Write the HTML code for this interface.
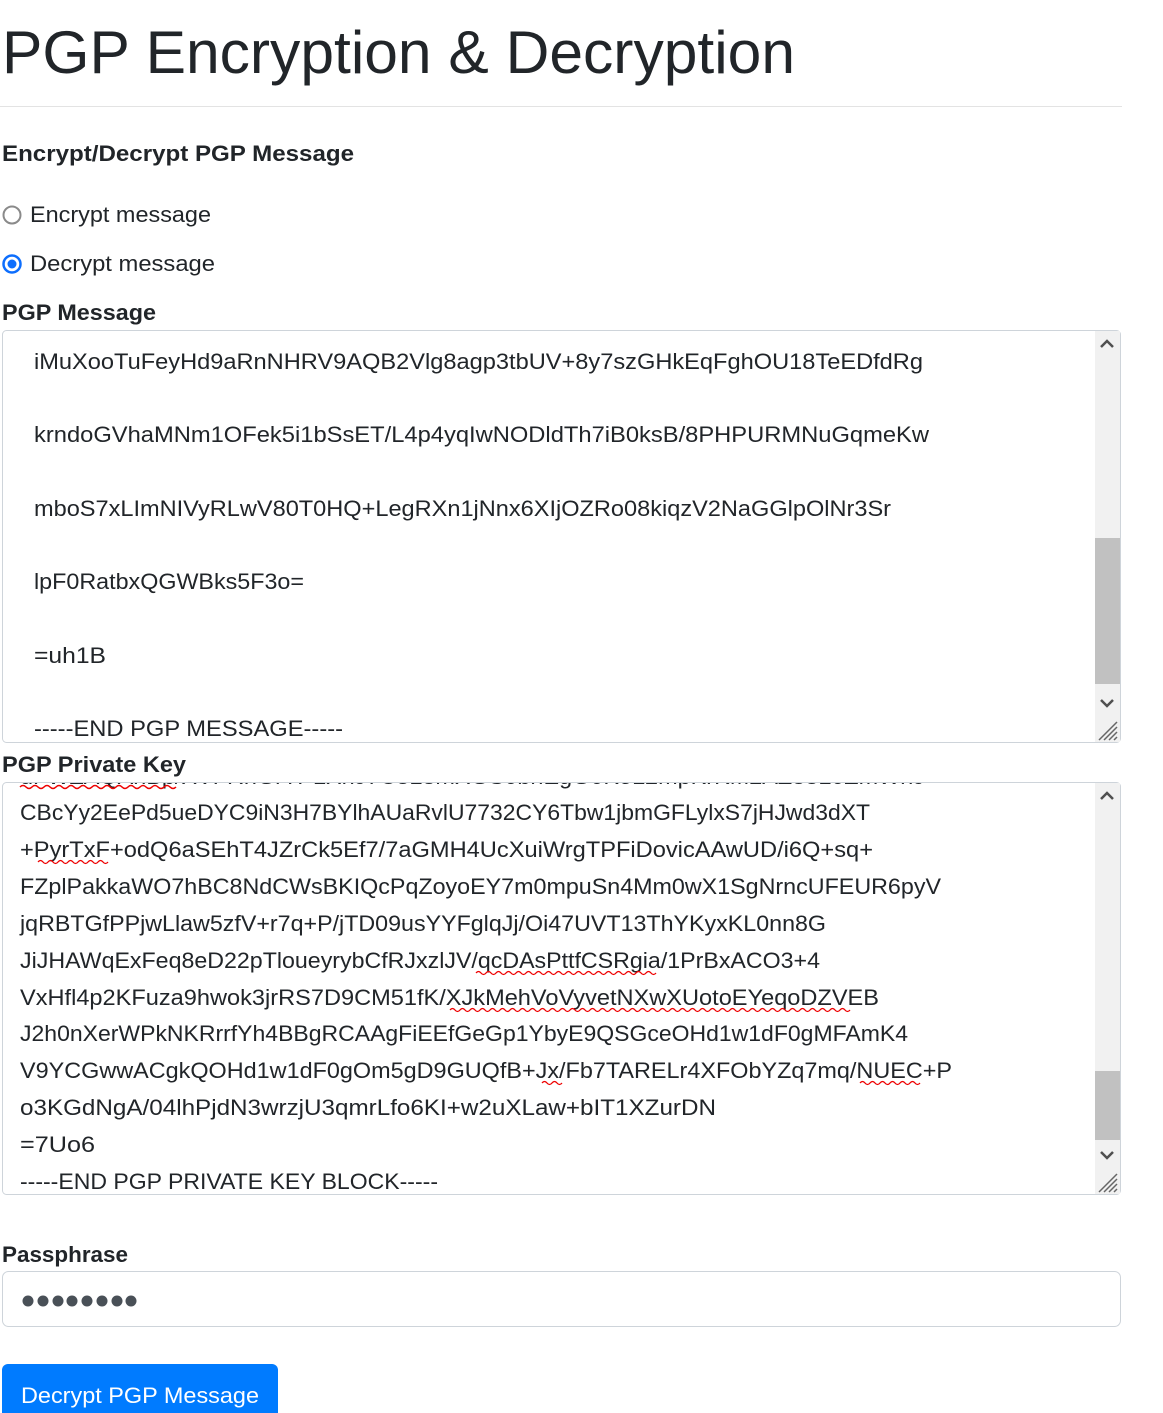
<!DOCTYPE html>
<html><head><meta charset="utf-8"><style>
html,body{margin:0;padding:0;background:#fff;width:1163px;height:1413px;overflow:hidden}
svg{display:block}
text{font-family:"Liberation Sans",sans-serif;fill:#212529}
.b{font-weight:bold}
</style></head><body>
<svg width="1163" height="1413" xmlns="http://www.w3.org/2000/svg">
<defs>
<clipPath id="c1"><rect x="3" y="331" width="1092" height="411"/></clipPath>
<clipPath id="c2"><rect x="3" y="783" width="1092" height="411"/></clipPath>
</defs>
<text x="2" y="73" font-size="60" textLength="793" lengthAdjust="spacingAndGlyphs">PGP Encryption &amp; Decryption</text>
<rect x="0" y="106" width="1122" height="1" fill="#e3e3e3"/>
<text class="b" x="2" y="161" font-size="22" textLength="352" lengthAdjust="spacingAndGlyphs">Encrypt/Decrypt PGP Message</text>
<circle cx="12" cy="215" r="8.5" fill="#fff" stroke="#8a8a8a" stroke-width="2"/>
<text x="30" y="222" font-size="22" textLength="181" lengthAdjust="spacingAndGlyphs">Encrypt message</text>
<circle cx="12" cy="264" r="8.5" fill="#fff" stroke="#0d6efd" stroke-width="2.5"/>
<circle cx="12" cy="264" r="4.5" fill="#0d6efd"/>
<text x="30" y="271" font-size="22" textLength="185" lengthAdjust="spacingAndGlyphs">Decrypt message</text>
<text class="b" x="2" y="320" font-size="22" textLength="154" lengthAdjust="spacingAndGlyphs">PGP Message</text>

<rect x="2.5" y="330.5" width="1118" height="412" rx="4" fill="#fff" stroke="#ced4da"/>
<g clip-path="url(#c1)" font-size="22">
<text x="34" y="369" font-size="22" textLength="889" lengthAdjust="spacingAndGlyphs">iMuXooTuFeyHd9aRnNHRV9AQB2Vlg8agp3tbUV+8y7szGHkEqFghOU18TeEDfdRg</text>
<text x="34" y="442" font-size="22" textLength="895" lengthAdjust="spacingAndGlyphs">krndoGVhaMNm1OFek5i1bSsET/L4p4yqIwNODldTh7iB0ksB/8PHPURMNuGqmeKw</text>
<text x="34" y="516" font-size="22" textLength="857" lengthAdjust="spacingAndGlyphs">mboS7xLImNIVyRLwV80T0HQ+LegRXn1jNnx6XIjOZRo08kiqzV2NaGGlpOlNr3Sr</text>
<text x="34" y="589" font-size="22" textLength="270" lengthAdjust="spacingAndGlyphs">lpF0RatbxQGWBks5F3o=</text>
<text x="34" y="663" font-size="22" textLength="72" lengthAdjust="spacingAndGlyphs">=uh1B</text>
<text x="34" y="736" font-size="22" textLength="309" lengthAdjust="spacingAndGlyphs">-----END PGP MESSAGE-----</text>
</g>
<rect x="1095" y="331" width="25" height="411" fill="#f1f1f1"/>
<rect x="1095" y="538" width="25" height="146" fill="#c1c1c1"/>
<path d="M1101 347 l6 -6 l6 6" fill="none" stroke="#505050" stroke-width="2.5"/>
<path d="M1101 700 l6 6 l6 -6" fill="none" stroke="#505050" stroke-width="2.5"/>
<path d="M1099 740 L1117 722 M1104 740 L1117 727 M1109 740 L1117 732 M1114 740 L1117 737" stroke="#666" stroke-width="1.5"/>

<text class="b" x="2" y="772" font-size="22" textLength="184" lengthAdjust="spacingAndGlyphs">PGP Private Key</text>
<rect x="2.5" y="782.5" width="1118" height="412" rx="4" fill="#fff" stroke="#ced4da"/>
<g clip-path="url(#c2)">
<text x="20" y="784" font-size="22" textLength="905" lengthAdjust="spacingAndGlyphs">dFWZAQAhBp/XVFRhGrTPLXnJ7C8L8mXGS0bnEgG0KoL2mpKrKM2AZ33L0ZmWnJ</text>
<path d="M20 787 q3 -3 6 0 t6 0 t6 0 t6 0 t6 0 t6 0 t6 0 t6 0 t6 0 t6 0 t6 0 t6 0 t6 0 t6 0 t6 0 t6 0 t6 0 t6 0 t6 0 t6 0 t6 0 t6 0 t6 0 t6 0 t6 0 t6 0" fill="none" stroke="#e00" stroke-width="1.5"/>
<text x="20" y="820" font-size="22" textLength="850" lengthAdjust="spacingAndGlyphs">CBcYy2EePd5ueDYC9iN3H7BYlhAUaRvlU7732CY6Tbw1jbmGFLylxS7jHJwd3dXT</text>
<text x="20" y="857" font-size="22" textLength="853" lengthAdjust="spacingAndGlyphs">+PyrTxF+odQ6aSEhT4JZrCk5Ef7/7aGMH4UcXuiWrgTPFiDovicAAwUD/i6Q+sq+</text>
<text x="20" y="894" font-size="22" textLength="921" lengthAdjust="spacingAndGlyphs">FZplPakkaWO7hBC8NdCWsBKIQcPqZoyoEY7m0mpuSn4Mm0wX1SgNrncUFEUR6pyV</text>
<text x="20" y="931" font-size="22" textLength="806" lengthAdjust="spacingAndGlyphs">jqRBTGfPPjwLlaw5zfV+r7q+P/jTD09usYYFglqJj/Oi47UVT13ThYKyxKL0nn8G</text>
<text x="20" y="968" font-size="22" textLength="800" lengthAdjust="spacingAndGlyphs">JiJHAWqExFeq8eD22pTloueyrybCfRJxzlJV/qcDAsPttfCSRgia/1PrBxACO3+4</text>
<text x="20" y="1005" font-size="22" textLength="859" lengthAdjust="spacingAndGlyphs">VxHfl4p2KFuza9hwok3jrRS7D9CM51fK/XJkMehVoVyvetNXwXUotoEYeqoDZVEB</text>
<text x="20" y="1041" font-size="22" textLength="888" lengthAdjust="spacingAndGlyphs">J2h0nXerWPkNKRrrfYh4BBgRCAAgFiEEfGeGp1YbyE9QSGceOHd1w1dF0gMFAmK4</text>
<text x="20" y="1078" font-size="22" textLength="932" lengthAdjust="spacingAndGlyphs">V9YCGwwACgkQOHd1w1dF0gOm5gD9GUQfB+Jx/Fb7TARELr4XFObYZq7mq/NUEC+P</text>
<text x="20" y="1115" font-size="22" textLength="696" lengthAdjust="spacingAndGlyphs">o3KGdNgA/04lhPjdN3wrzjU3qmrLfo6KI+w2uXLaw+bIT1XZurDN</text>
<text x="20" y="1152" font-size="22" textLength="75" lengthAdjust="spacingAndGlyphs">=7Uo6</text>
<text x="20" y="1189" font-size="22" textLength="418" lengthAdjust="spacingAndGlyphs">-----END PGP PRIVATE KEY BLOCK-----</text>
<g fill="none" stroke="#e00" stroke-width="1.3">
<path d="M38 862 q2.5 -3 5 0 t5 0 t5 0 t5 0 t5 0 t5 0 t5 0 t5 0 t5 0 t5 0 t5 0 t5 0 t5 0 t5 0"/>
<path d="M476 973 q2.5 -3 5 0 t5 0 t5 0 t5 0 t5 0 t5 0 t5 0 t5 0 t5 0 t5 0 t5 0 t5 0 t5 0 t5 0 t5 0 t5 0 t5 0 t5 0 t5 0 t5 0 t5 0 t5 0 t5 0 t5 0 t5 0 t5 0 t5 0 t5 0 t5 0 t5 0 t5 0 t5 0 t5 0 t5 0 t5 0 t5 0"/>
<path d="M450 1010 q2.5 -3 5 0 t5 0 t5 0 t5 0 t5 0 t5 0 t5 0 t5 0 t5 0 t5 0 t5 0 t5 0 t5 0 t5 0 t5 0 t5 0 t5 0 t5 0 t5 0 t5 0 t5 0 t5 0 t5 0 t5 0 t5 0 t5 0 t5 0 t5 0 t5 0 t5 0 t5 0 t5 0 t5 0 t5 0 t5 0 t5 0 t5 0 t5 0 t5 0 t5 0 t5 0 t5 0 t5 0 t5 0 t5 0 t5 0 t5 0 t5 0 t5 0 t5 0 t5 0 t5 0 t5 0 t5 0 t5 0 t5 0 t5 0 t5 0 t5 0 t5 0 t5 0 t5 0 t5 0 t5 0 t5 0 t5 0 t5 0 t5 0 t5 0 t5 0 t5 0 t5 0 t5 0 t5 0 t5 0 t5 0 t5 0 t5 0 t5 0 t5 0"/>
<path d="M542 1083 q2.5 -3 5 0 t5 0 t5 0 t5 0"/>
<path d="M860 1083 q2.5 -3 5 0 t5 0 t5 0 t5 0 t5 0 t5 0 t5 0 t5 0 t5 0 t5 0 t5 0 t5 0"/>
</g>
</g>
<rect x="1095" y="783" width="25" height="411" fill="#f1f1f1"/>
<rect x="1095" y="1071" width="25" height="69" fill="#c1c1c1"/>
<path d="M1101 799 l6 -6 l6 6" fill="none" stroke="#505050" stroke-width="2.5"/>
<path d="M1101 1152 l6 6 l6 -6" fill="none" stroke="#505050" stroke-width="2.5"/>
<path d="M1099 1192 L1117 1174 M1104 1192 L1117 1179 M1109 1192 L1117 1184 M1114 1192 L1117 1189" stroke="#666" stroke-width="1.5"/>

<text class="b" x="2" y="1262" font-size="22" textLength="126" lengthAdjust="spacingAndGlyphs">Passphrase</text>
<rect x="2.5" y="1271.5" width="1118" height="55" rx="6" fill="#fff" stroke="#ced4da"/>
<g fill="#495057">
<circle cx="28" cy="1301" r="5.5"/><circle cx="43" cy="1301" r="5.5"/><circle cx="58" cy="1301" r="5.5"/><circle cx="72" cy="1301" r="5.5"/><circle cx="87" cy="1301" r="5.5"/><circle cx="102" cy="1301" r="5.5"/><circle cx="117" cy="1301" r="5.5"/><circle cx="131" cy="1301" r="5.5"/>
</g>
<rect x="2" y="1364" width="276" height="60" rx="6" fill="#007bff"/>
<text x="21" y="1403" font-size="22" textLength="238" lengthAdjust="spacingAndGlyphs" style="fill:#fff">Decrypt PGP Message</text>
</svg>
</body></html>
